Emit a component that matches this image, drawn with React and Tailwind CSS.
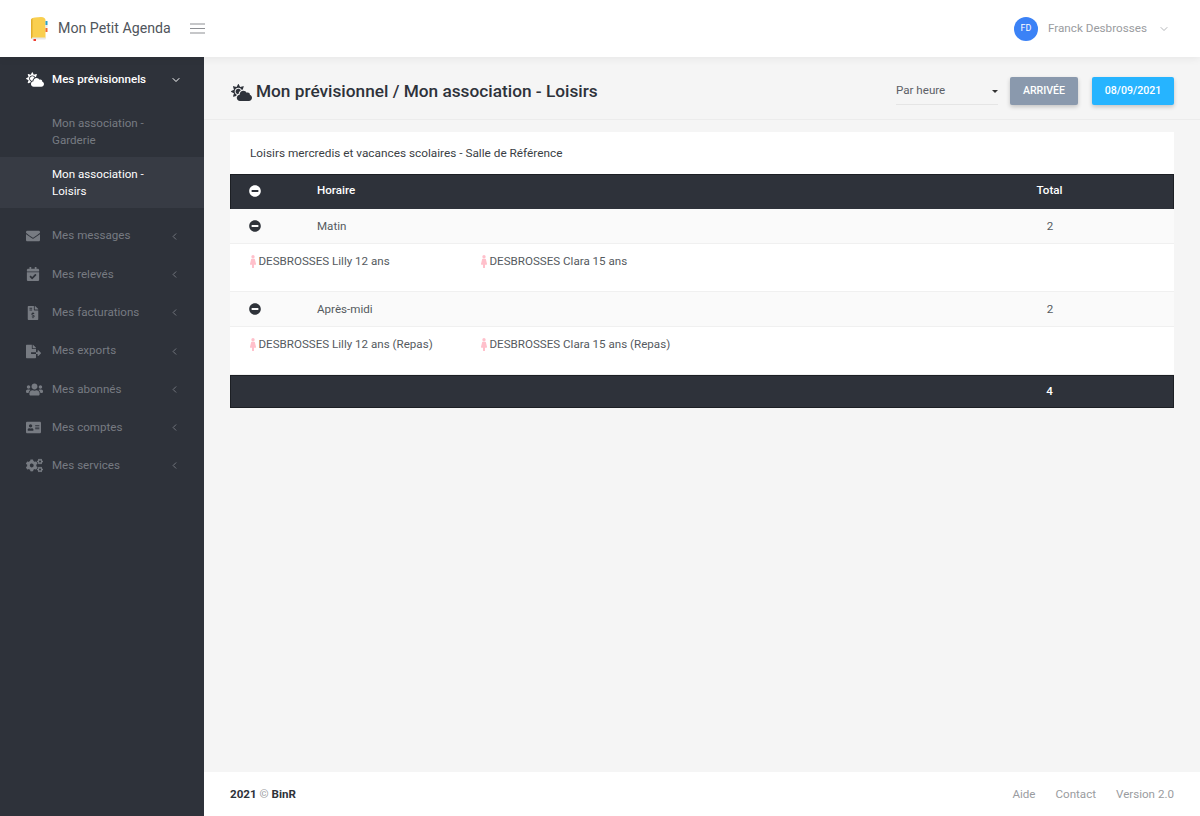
import { FaCloudSun, FaEnvelope, FaCalendarCheck, FaFileInvoiceDollar, FaFileExport, FaUsers, FaAddressCard, FaCogs, FaMinusCircle, FaFemale } from "react-icons/fa";
import { ChevronLeft, ChevronDown } from "lucide-react";

const menu = [
  { label: "Mes messages", icon: FaEnvelope, size: "text-[14px]" },
  { label: "Mes relevés", icon: FaCalendarCheck, size: "text-[14px]" },
  { label: "Mes facturations", icon: FaFileInvoiceDollar, size: "text-[14px]" },
  { label: "Mes exports", icon: FaFileExport, size: "text-[15px]" },
  { label: "Mes abonnés", icon: FaUsers, size: "text-[17px]" },
  { label: "Mes comptes", icon: FaAddressCard, size: "text-[15px]" },
  { label: "Mes services", icon: FaCogs, size: "text-[17px]" },
];

const Logo = () => (
  <svg width="18" height="24" viewBox="0 0 18 24" className="shrink-0">
    <path d="M1 3.5 C1 1.5 3 0.5 5 0.5 L11 0 C14 0 15.5 1.5 15.5 3 L15.5 21.5 L2 21.5 C1.4 21.5 1 21 1 20.5 Z" fill="#f9cf4f" />
    <path d="M1 3.5 C1 2.5 1.5 1.5 2.5 1 L2.5 21.5 L2 21.5 C1.4 21.5 1 21 1 20.5 Z" fill="#e2ae2c" />
    <rect x="2" y="20.5" width="13.5" height="2" fill="#e8e8e8" />
    <rect x="15.5" y="4" width="2" height="4" fill="#2b9fc7" />
    <rect x="15.5" y="8" width="2" height="2.5" fill="#e9e9e9" />
    <rect x="15.5" y="11" width="2" height="4" fill="#f0682c" />
    <rect x="3.5" y="22" width="2.5" height="2" fill="#ef3b2d" />
  </svg>
);

const Burger = () => (
  <svg width="15" height="11" viewBox="0 0 15 11" className="ml-[19px] text-[#8d8f93]" fill="none" stroke="currentColor" strokeWidth="1">
    <path d="M0 1h15M0 5.5h15M0 10h15" />
  </svg>
);

const Person = ({ text }) => (
  <span className="flex items-center">
    <FaFemale className="text-[#ffc0cb] text-[13px] w-[8px] shrink-0" />
    <span className="ml-[1.5px]">{text}</span>
  </span>
);

const Group = ({ name, count, people }) => (
  <>
    <div className="flex items-center h-[35px] pt-px bg-[#fafafa] border-b border-[#f0f0f0] text-[#555a60]">
      <div className="w-[87px] pl-[19px] pb-px">
        <FaMinusCircle className="text-[#2f333a] text-[12px]" />
      </div>
      <div className="flex-1">{name}</div>
      <div className="w-[248px] text-center">{count}</div>
    </div>
    <div className="flex h-[48px] pt-[9px] pl-[19px] bg-white border-b border-[#f0f0f0] text-[#555a60]">
      <div className="w-[231px]"><Person text={people[0]} /></div>
      <div><Person text={people[1]} /></div>
    </div>
  </>
);

export default function App() {
  return (
    <div className="h-screen flex flex-col overflow-hidden bg-[#f5f5f5] text-[11.6px] font-['Roboto',sans-serif]">
      <header className="h-[57px] shrink-0 bg-white flex items-center justify-between pl-[30px] pr-[30px] shadow-[0_2px_8px_rgba(0,0,0,0.06)] relative z-10">
        <div className="flex items-center">
          <Logo />
          <span className="ml-[10px] text-[14.2px] text-[#50555c]">Mon Petit Agenda</span>
          <Burger />
        </div>
        <div className="flex items-center">
          <div className="w-[24px] h-[24px] rounded-full bg-[#3b82f6] text-white text-[9px] flex items-center justify-center">FD</div>
          <span className="ml-[10px] text-[11.7px] text-[#9a9ca0]">Franck Desbrosses</span>
          <ChevronDown className="ml-[11px] text-[#9a9ca0]" size={12} strokeWidth={1.5} />
        </div>
      </header>

      <div className="flex-1 flex min-h-0">
        <aside className="w-[204px] shrink-0 bg-[#2e323a]">
          <div className="h-[45px] flex items-center pl-[26px] pr-[22px] text-white font-medium">
            <FaCloudSun className="text-[17px] w-[18px]" />
            <span className="ml-[8px] flex-1">Mes prévisionnels</span>
            <ChevronDown size={12} />
          </div>
          <div className="h-[55px] pt-[13px] pl-[52px] pr-[40px] leading-[17px] text-[#777b82]">Mon association - Garderie</div>
          <div className="h-[51px] pt-[9px] pl-[52px] pr-[40px] leading-[17px] text-white bg-[#373b44]">Mon association - Loisirs</div>
          <nav className="pt-[9px]">
            {menu.map(({ label, icon: Icon, size }) => (
              <div key={label} className="h-[38.3px] flex items-center pl-[26px] pr-[24px] text-[#777b82]">
                <div className="w-[26px]"><Icon className={size} /></div>
                <span className="flex-1">{label}</span>
                <ChevronLeft size={11} />
              </div>
            ))}
          </nav>
        </aside>

        <div className="flex-1 flex flex-col min-w-0">
          <div className="h-[63px] shrink-0 flex items-center justify-between pt-[6px] pl-[26px] pr-[26px] border-b border-[#ececec]">
            <div className="flex items-center pt-[2px] text-[17.25px] font-medium text-[#2e323a]">
              <FaCloudSun className="text-[21px] ml-px mr-[4px]" />
              Mon prévisionnel / Mon association - Loisirs
            </div>
            <div className="flex items-center">
              <div className="w-[102px] h-[28px] pt-px flex items-center justify-between text-[#5c6066] border-b border-[#e5e5e5]">
                <span>Par heure</span>
                <span className="w-0 h-0 border-l-[3px] border-r-[3px] border-t-[3px] border-l-transparent border-r-transparent border-t-[#333]" />
              </div>
              <button className="ml-[12px] w-[68px] h-[28px] rounded-[2px] bg-[#8a99ad] text-white text-[10.6px] font-medium shadow-[0_2px_4px_rgba(0,0,0,0.2)]">ARRIVÉE</button>
              <button className="ml-[14px] w-[82px] h-[28px] rounded-[2px] bg-[#26b4ff] text-white text-[10.6px] font-medium shadow-[0_2px_4px_rgba(0,0,0,0.2)]">08/09/2021</button>
            </div>
          </div>

          <main className="flex-1 min-h-0 px-[26px] pt-[12px]">
            <div className="bg-white">
              <div className="h-[42px] flex items-center pl-[20px] pt-px text-[#3a3e44] text-[11.8px]">Loisirs mercredis et vacances scolaires - Salle de Référence</div>
              <div className="flex items-center h-[35px] pb-[2px] bg-[#2e323a] border-x border-t border-[#1c1f24] text-white font-medium">
                <div className="w-[86px] pl-[18px]"><FaMinusCircle className="text-[12px]" /></div>
                <div className="flex-1">Horaire</div>
                <div className="w-[247px] text-center">Total</div>
              </div>
              <Group name="Matin" count="2" people={["DESBROSSES Lilly 12 ans", "DESBROSSES Clara 15 ans"]} />
              <Group name="Après-midi" count="2" people={["DESBROSSES Lilly 12 ans (Repas)", "DESBROSSES Clara 15 ans (Repas)"]} />
              <div className="flex items-center h-[33px] pt-[1px] bg-[#2e323a] border border-[#1c1f24] text-white font-medium">
                <div className="flex-1" />
                <div className="w-[247px] text-center">4</div>
              </div>
            </div>
          </main>

          <footer className="h-[44px] shrink-0 bg-white flex items-center justify-between pt-px pl-[26px] pr-[26px]">
            <div className="font-bold text-[#2e323a]">2021 <span className="font-normal text-[#9a9ca0]">©</span> BinR</div>
            <div className="flex gap-[20px] text-[#9a9ca0]">
              <span>Aide</span>
              <span>Contact</span>
              <span>Version 2.0</span>
            </div>
          </footer>
        </div>
      </div>
    </div>
  );
}
